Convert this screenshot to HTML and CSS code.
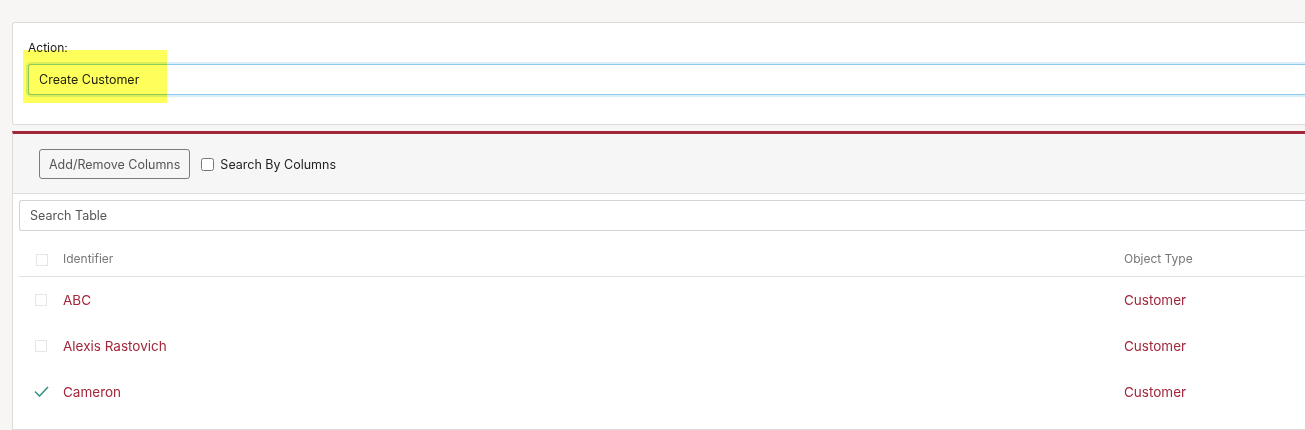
FILE: index.html
```html
<!DOCTYPE html>
<html>
  <head>
    <title>Create Customer</title>
    <link rel="stylesheet" href="styles.css">
  </head>
  <body>
    <div class="panel action-panel">
      <label class="action-label" for="action">Action:</label>
      <input class="action-input" id="action" type="text" value="Create Customer">
      <div class="highlight"></div>
    </div>

    <div class="panel list-panel">
      <div class="toolbar">
        <button class="columns-btn">Add/Remove Columns</button>
        <label class="search-toggle">
          <input type="checkbox"> Search By Columns
        </label>
      </div>

      <div class="list-body">
        <input class="search-table" type="text" placeholder="Search Table">

        <table class="records">
          <thead>
            <tr>
              <th class="col-check"><span class="box"></span></th>
              <th>Identifier</th>
              <th class="col-type">Object Type</th>
            </tr>
          </thead>
          <tbody>
            <tr>
              <td class="col-check"><span class="box"></span></td>
              <td><a href="#">ABC</a></td>
              <td class="col-type"><a href="#">Customer</a></td>
            </tr>
            <tr>
              <td class="col-check"><span class="box"></span></td>
              <td><a href="#">Alexis Rastovich</a></td>
              <td class="col-type"><a href="#">Customer</a></td>
            </tr>
            <tr>
              <td class="col-check">
                <svg class="tick" width="15" height="11" viewBox="0 0 15 11">
                  <path d="M1 5.5 L5.5 10 L14 1" fill="none" stroke="#3a9583" stroke-width="1.6"/>
                </svg>
              </td>
              <td><a href="#">Cameron</a></td>
              <td class="col-type"><a href="#">Customer</a></td>
            </tr>
          </tbody>
        </table>
      </div>
    </div>
  </body>
</html>
```

FILE: styles.css
```css
body {
  margin: 0;
  padding: 22px 0 0 12px;
  background: #f7f6f4;
  font-family: Inter, "Liberation Sans", Arial, sans-serif;
  color: #222;
  overflow: hidden;
}

.panel {
  background: #fff;
  border: 1px solid #dcdcdc;
  border-right: none;
  border-radius: 3px 0 0 3px;
}

.action-panel {
  position: relative;
  height: 103px;
  padding: 18px 0 0 15px;
  box-sizing: border-box;
}

.action-label {
  display: block;
  font-size: 12px;
  line-height: 14px;
  margin-bottom: 9px;
  color: #1a1a1a;
}

.action-input {
  display: block;
  width: 100%;
  height: 31px;
  box-sizing: border-box;
  padding: 0 10px;
  border: 1px solid #8ec8ea;
  border-right: none;
  border-radius: 3px 0 0 3px;
  box-shadow: 0 0 0 2px rgba(150, 205, 240, 0.35);
  font-family: inherit;
  font-size: 12.5px;
  color: #222;
  outline: none;
}

.highlight {
  position: absolute;
  left: 10px;
  top: 27px;
  width: 144px;
  height: 53px;
  background: #ffff5c;
  mix-blend-mode: multiply;
}

.list-panel {
  margin-top: 6px;
  border-top: 3px solid #a3273b;
  border-radius: 0;
}

.toolbar {
  display: flex;
  align-items: center;
  gap: 11px;
  padding: 15px 0 14px 26px;
  background: #f6f6f6;
  border-bottom: 1px solid #dedede;
}

.columns-btn {
  height: 30px;
  padding: 0 9px;
  background: #f6f6f6;
  border: 1px solid #7b7b7b;
  border-radius: 3px;
  font-family: inherit;
  font-size: 12.5px;
  color: #555;
}

.search-toggle {
  display: flex;
  align-items: center;
  gap: 6px;
  font-size: 12.5px;
  color: #222;
}

.search-toggle input {
  width: 13px;
  height: 13px;
  margin: 0;
}

.list-body {
  padding: 6px 0 14px 6px;
}

.search-table {
  display: block;
  width: 100%;
  height: 31px;
  box-sizing: border-box;
  padding: 0 10px;
  border: 1px solid #cfd4d8;
  border-right: none;
  border-radius: 3px 0 0 3px;
  font-family: inherit;
  font-size: 12.5px;
}

.search-table::placeholder {
  color: #555;
}

.records {
  width: 100%;
  border-collapse: collapse;
}

.records th {
  height: 45px;
  padding: 0;
  text-align: left;
  vertical-align: bottom;
  padding-bottom: 10px;
  font-weight: normal;
  font-size: 12px;
  color: #777;
  border-bottom: 1px solid #dfe2e5;
  box-sizing: border-box;
}

.records td {
  height: 46px;
  padding: 0;
  font-size: 13.5px;
}

.records a {
  color: #a3273b;
  text-decoration: none;
}

.col-check {
  width: 44px;
  padding-left: 16px !important;
  box-sizing: border-box;
}

.records td.col-check {
  padding-left: 15px !important;
}

.col-type {
  width: 181px;
}

.box {
  display: block;
  width: 10px;
  height: 10px;
  border: 1px solid #e6e6e6;
  margin-left: 1px;
}

.tick {
  display: block;
}
```
